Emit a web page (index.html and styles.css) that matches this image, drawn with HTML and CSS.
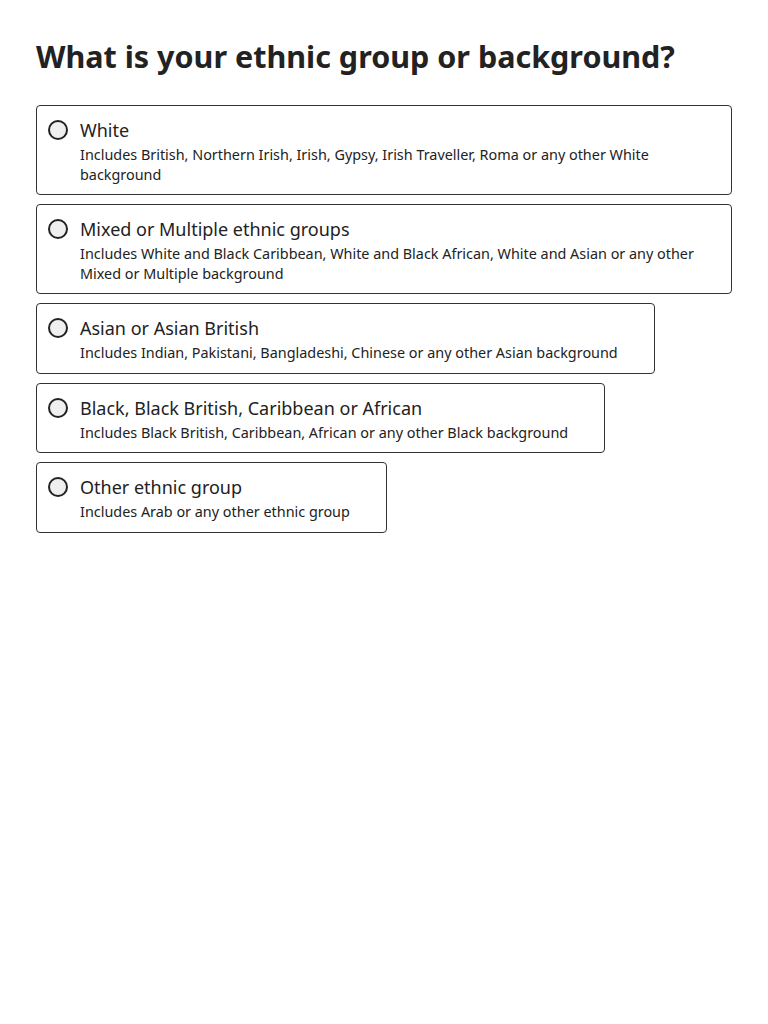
FILE: index.html
```html
<!DOCTYPE html>
<html lang="en">
<head>
<meta charset="utf-8">
<title>Ethnic group</title>
<link rel="stylesheet" href="styles.css">
</head>
<body>
<main class="page">
  <h1 class="title">What is your ethnic group or background?</h1>
  <div class="options">
    <label class="option">
      <span class="radio"></span>
      <span class="text">
        <span class="label">White</span>
        <span class="desc">Includes British, Northern Irish, Irish, Gypsy, Irish Traveller, Roma or any other White background</span>
      </span>
    </label>
    <label class="option">
      <span class="radio"></span>
      <span class="text">
        <span class="label">Mixed or Multiple ethnic groups</span>
        <span class="desc">Includes White and Black Caribbean, White and Black African, White and Asian or any other Mixed or Multiple background</span>
      </span>
    </label>
    <label class="option">
      <span class="radio"></span>
      <span class="text">
        <span class="label">Asian or Asian British</span>
        <span class="desc">Includes Indian, Pakistani, Bangladeshi, Chinese or any other Asian background</span>
      </span>
    </label>
    <label class="option">
      <span class="radio"></span>
      <span class="text">
        <span class="label">Black, Black British, Caribbean or African</span>
        <span class="desc">Includes Black British, Caribbean, African or any other Black background</span>
      </span>
    </label>
    <label class="option">
      <span class="radio"></span>
      <span class="text">
        <span class="label">Other ethnic group</span>
        <span class="desc">Includes Arab or any other ethnic group</span>
      </span>
    </label>
  </div>
</main>
</body>
</html>
```
FILE: styles.css
```css
html, body {
  margin: 0;
  padding: 0;
  background: #fff;
}
body {
  font-family: "Noto Sans", "Open Sans", sans-serif;
  color: #222;
}
.page {
  padding: 36px 36px;
}
.title {
  margin: 0 0 29px;
  font-size: 30.5px;
  line-height: 40px;
  font-weight: 700;
  color: #222;
}
.options {
  display: flex;
  flex-direction: column;
  align-items: flex-start;
  gap: 9px;
}
.option {
  display: flex;
  align-items: flex-start;
  gap: 12px;
  box-sizing: border-box;
  max-width: 100%;
  padding: 12px 36px 10px 11px;
  border: 1px solid #333;
  border-radius: 4px;
  background: #fff;
}
.radio {
  flex: none;
  width: 20px;
  height: 20px;
  margin-top: 2px;
  box-sizing: border-box;
  border: 2px solid #222;
  border-radius: 50%;
  background: #efefef;
}
.text {
  display: flex;
  flex-direction: column;
  gap: 3px;
}
.label {
  font-size: 18px;
  line-height: 24px;
  color: #222;
}
.desc {
  font-size: 14.4px;
  line-height: 19.5px;
  color: #222;
}
```
